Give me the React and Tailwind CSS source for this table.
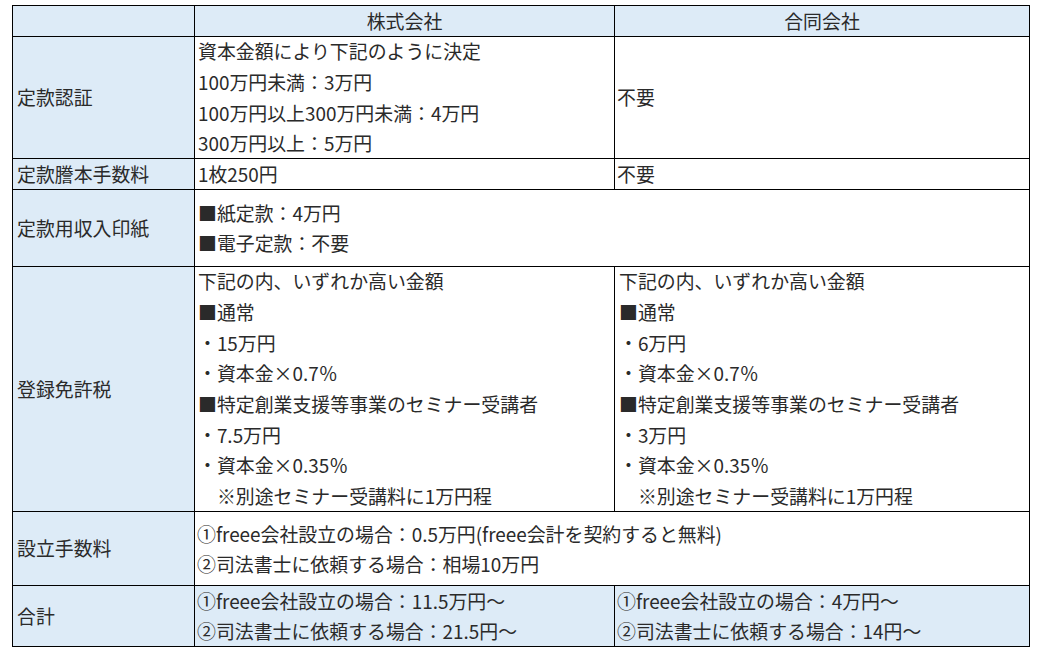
const blue = "bg-[#ddebf7]";

function Cell({ children, className = "", span = false, center = false }) {
    return (
        <div
            className={`border-r border-b border-black flex flex-col justify-center ${center ? "items-center" : "items-start"} ${span ? "col-span-2" : ""} ${className}`}
        >
            {children}
        </div>
    );
}

function Lines({ items }) {
    return (
        <>
            {items.map((t, i) => (
                <div key={i} className="whitespace-pre">{t}</div>
            ))}
        </>
    );
}

const kabuTax = [
    "下記の内、いずれか高い金額",
    "■通常",
    "・15万円",
    "・資本金×0.7％",
    "■特定創業支援等事業のセミナー受講者",
    "・7.5万円",
    "・資本金×0.35％",
    "　※別途セミナー受講料に1万円程",
];

const goudouTax = [
    "下記の内、いずれか高い金額",
    "■通常",
    "・6万円",
    "・資本金×0.7％",
    "■特定創業支援等事業のセミナー受講者",
    "・3万円",
    "・資本金×0.35％",
    "　※別途セミナー受講料に1万円程",
];

export default function App() {
    return (
        <div className="min-h-screen bg-white pt-[5px] pl-[12px] text-[#2a2a2a] text-[18.9px] leading-[30.7px] font-['Noto_Sans_CJK_JP',sans-serif]">
            <div className="w-[1018px] border-t border-l border-black grid grid-cols-[182px_420px_415px] grid-rows-[31px_122px_31px_77px_245px_74px_61px]">
                {/* header */}
                <Cell className={blue} />
                <Cell className={blue} center>株式会社</Cell>
                <Cell className={blue} center>合同会社</Cell>

                {/* 定款認証 */}
                <Cell className={`${blue} pl-[4px]`}>定款認証</Cell>
                <Cell className="pl-[3px]">
                    <Lines items={["資本金額により下記のように決定", "100万円未満：3万円", "100万円以上300万円未満：4万円", "300万円以上：5万円"]} />
                </Cell>
                <Cell className="pl-[2px]">不要</Cell>

                {/* 定款謄本手数料 */}
                <Cell className={`${blue} pl-[4px]`}>定款謄本手数料</Cell>
                <Cell className="pl-[3px]">1枚250円</Cell>
                <Cell className="pl-[2px]">不要</Cell>

                {/* 定款用収入印紙 */}
                <Cell className={`${blue} pl-[4px]`}>定款用収入印紙</Cell>
                <Cell span className="pl-[3px] leading-[30px]">
                    <Lines items={["■紙定款：4万円", "■電子定款：不要"]} />
                </Cell>

                {/* 登録免許税 */}
                <Cell className={`${blue} pl-[4px]`}>登録免許税</Cell>
                <Cell className="pl-[3px]">
                    <Lines items={kabuTax} />
                </Cell>
                <Cell className="pl-[4px]">
                    <Lines items={goudouTax} />
                </Cell>

                {/* 設立手数料 */}
                <Cell className={`${blue} pl-[4px]`}>設立手数料</Cell>
                <Cell span className="pl-[2px] leading-[30px]">
                    <Lines items={["①freee会社設立の場合：0.5万円(freee会計を契約すると無料)", "②司法書士に依頼する場合：相場10万円"]} />
                </Cell>

                {/* 合計 */}
                <Cell className={`${blue} pl-[4px]`}>合計</Cell>
                <Cell className={`${blue} pl-[2px] leading-[30px]`}>
                    <Lines items={["①freee会社設立の場合：11.5万円～", "②司法書士に依頼する場合：21.5円～"]} />
                </Cell>
                <Cell className={`${blue} pl-[2px] leading-[30px]`}>
                    <Lines items={["①freee会社設立の場合：4万円～", "②司法書士に依頼する場合：14円～"]} />
                </Cell>
            </div>
        </div>
    );
}
